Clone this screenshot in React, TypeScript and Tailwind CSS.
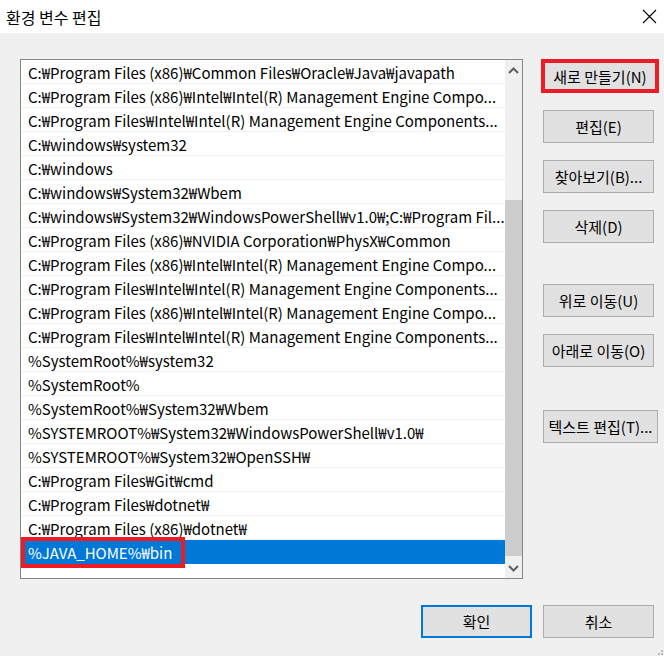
import React from "react";

const paths = [
  "C:₩Program Files (x86)₩Common Files₩Oracle₩Java₩javapath",
  "C:₩Program Files (x86)₩Intel₩Intel(R) Management Engine Compo...",
  "C:₩Program Files₩Intel₩Intel(R) Management Engine Components...",
  "C:₩windows₩system32",
  "C:₩windows",
  "C:₩windows₩System32₩Wbem",
  "C:₩windows₩System32₩WindowsPowerShell₩v1.0₩;C:₩Program Fil...",
  "C:₩Program Files (x86)₩NVIDIA Corporation₩PhysX₩Common",
  "C:₩Program Files (x86)₩Intel₩Intel(R) Management Engine Compo...",
  "C:₩Program Files₩Intel₩Intel(R) Management Engine Components...",
  "C:₩Program Files (x86)₩Intel₩Intel(R) Management Engine Compo...",
  "C:₩Program Files₩Intel₩Intel(R) Management Engine Components...",
  "%SystemRoot%₩system32",
  "%SystemRoot%",
  "%SystemRoot%₩System32₩Wbem",
  "%SYSTEMROOT%₩System32₩WindowsPowerShell₩v1.0₩",
  "%SYSTEMROOT%₩System32₩OpenSSH₩",
  "C:₩Program Files₩Git₩cmd",
  "C:₩Program Files₩dotnet₩",
  "C:₩Program Files (x86)₩dotnet₩",
];

const font = { fontFamily: '"Noto Sans CJK KR", "Noto Sans", sans-serif' };

function Btn({
  label,
  className = "",
}: {
  label: string;
  className?: string;
}) {
  return (
    <div
      className={`h-[33px] w-[111px] border border-[#adadad] bg-[#e1e1e1] flex items-center justify-center text-[15px] text-black ${className}`}
    >
      {label}
    </div>
  );
}

function Chevron({ up }: { up?: boolean }) {
  return (
    <svg width="11" height="7" viewBox="0 0 11 7">
      <path
        d={up ? "M1 6 L5.5 1.5 L10 6" : "M1 1 L5.5 5.5 L10 1"}
        fill="none"
        stroke="#606060"
        strokeWidth="2"
      />
    </svg>
  );
}

export default function App() {
  return (
    <div
      className="w-[664px] h-[656px] bg-[#f0f0f0] flex flex-col relative overflow-hidden leading-none"
      style={font}
    >
      {/* title bar */}
      <div className="h-[33px] bg-white flex items-center justify-between pl-[6px] pr-[7px]">
        <span className="text-[16px] text-black">환경 변수 편집</span>
        <svg width="15" height="15" viewBox="0 0 15 15">
          <path d="M1 1 L14 14 M14 1 L1 14" stroke="#000" strokeWidth="1.1" />
        </svg>
      </div>

      <div className="flex pl-[20px] pt-[26px]">
        {/* list */}
        <div className="relative w-[503px] h-[520px] border border-[#828790] bg-white flex">
          <div className="flex-1 flex flex-col">
            {paths.map((p, i) => (
              <div
                key={i}
                className="h-[24px] border-b border-[#f0f0f0] pl-[7px] pt-[1px] flex items-center whitespace-nowrap overflow-hidden text-[15px] text-black"
              >
                {p}
              </div>
            ))}
            <div className="h-[24px] bg-[#0078d7] pl-[7px] pt-[1px] flex items-center whitespace-nowrap text-[15px] text-white">
              %JAVA_HOME%₩bin
            </div>
          </div>
          {/* scrollbar */}
          <div className="w-[20px] bg-[#f0f0f0] flex flex-col">
            <div className="h-[20px] flex items-center justify-center">
              <Chevron up />
            </div>
            <div className="flex-1 flex flex-col">
              <div className="h-[120px]" />
              <div className="h-[356px] bg-[#cdcdcd]" />
            </div>
            <div className="h-[20px] flex items-center justify-center">
              <Chevron />
            </div>
          </div>
          <div className="absolute left-0 top-[477px] w-[164px] h-[31px] border-4 border-[#ed1c24]" />
        </div>

        {/* buttons */}
        <div className="flex flex-col ml-[20px]">
          <div className="-ml-[2px] h-[34px] w-[118px] border-4 border-[#ed1c24] bg-[#e1e1e1] flex items-center justify-center text-[15px] text-black">
            새로 만들기(N)
          </div>
          <Btn label="편집(E)" className="mt-[17px]" />
          <Btn label="찾아보기(B)..." className="mt-[17px]" />
          <Btn label="삭제(D)" className="mt-[17px]" />
          <Btn label="위로 이동(U)" className="mt-[41px]" />
          <Btn label="아래로 이동(O)" className="mt-[17px]" />
          <Btn label="텍스트 편집(T)..." className="mt-[43px] w-[115px]" />
        </div>
      </div>

      {/* ok / cancel */}
      <div className="flex justify-end gap-[11px] pr-[10px] mt-[26px]">
        <div className="h-[33px] w-[111px] border-2 border-[#0078d7] bg-[#e1e1e1] flex items-center justify-center text-[15px] text-black">
          확인
        </div>
        <Btn label="취소" />
      </div>

      {/* resize grip */}
      <div className="absolute right-[1px] bottom-[1px] flex flex-col items-end gap-[1px]">
        <div className="w-[2px] h-[2px] bg-[#bcbcbc]" />
        <div className="flex gap-[1px]">
          <div className="w-[2px] h-[2px] bg-[#bcbcbc]" />
          <div className="w-[2px] h-[2px] bg-[#bcbcbc]" />
        </div>
      </div>
    </div>
  );
}
